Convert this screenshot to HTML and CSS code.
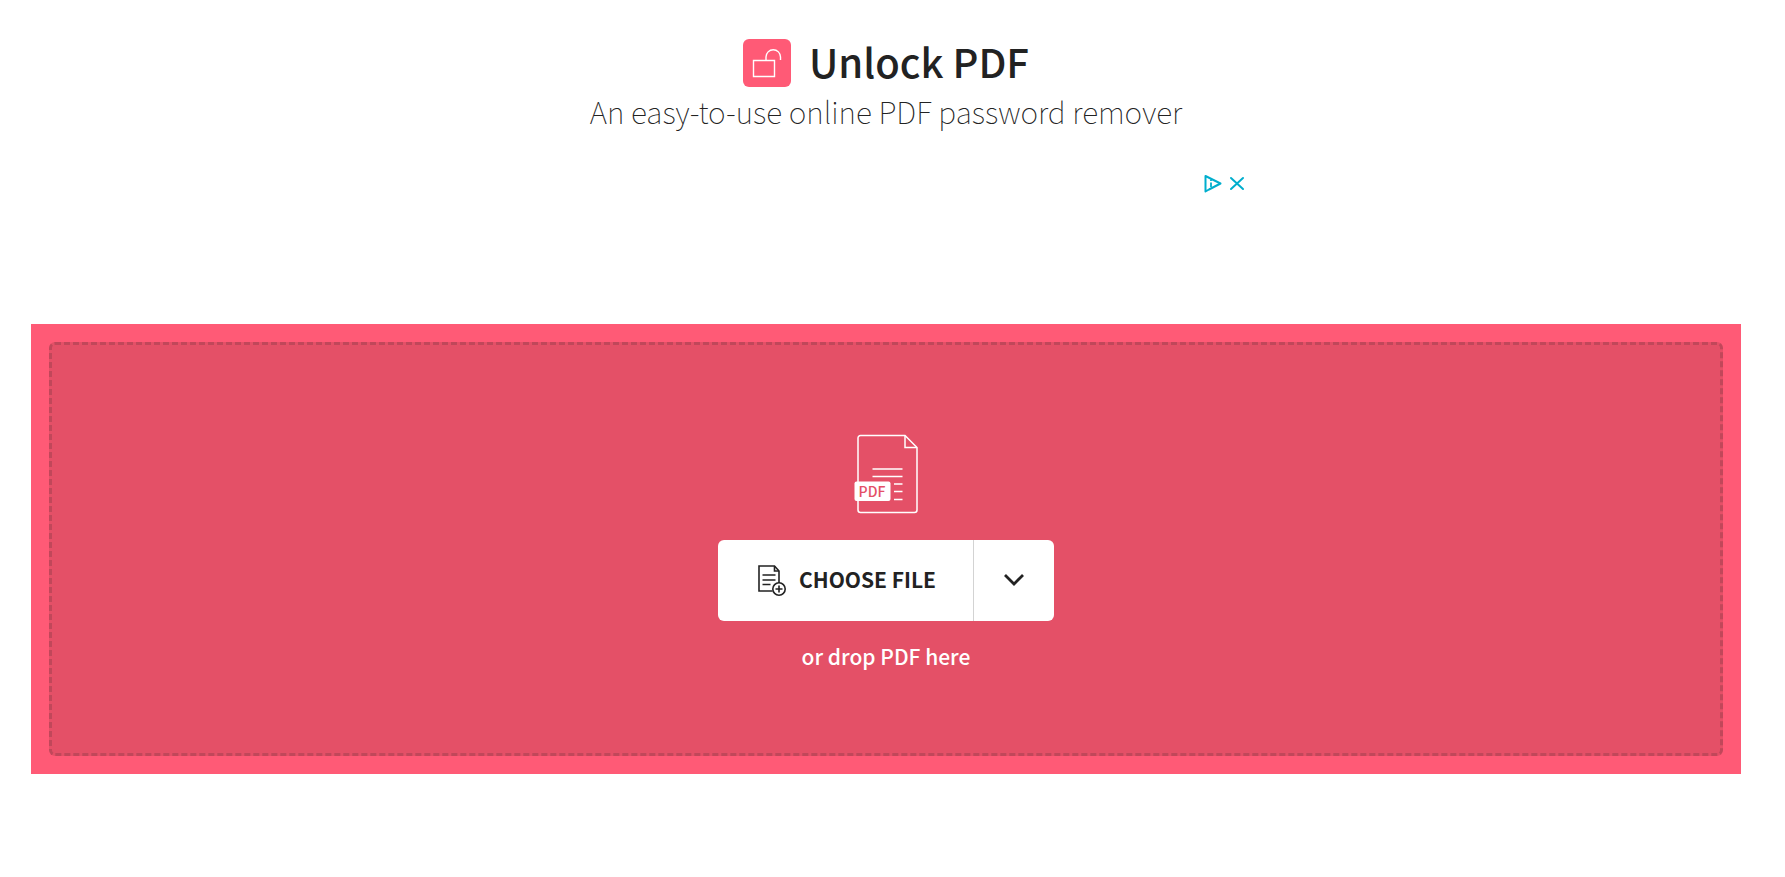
FILE: index.html
```html
<!DOCTYPE html>
<html lang="en">
<head>
    <meta charset="UTF-8">
    <title>Unlock PDF</title>
    <link rel="stylesheet" href="styles.css">
</head>

<body>
<div class="page">
    <header class="header">
        <div class="title">
            <span class="title-icon">
                <svg width="48" height="48" viewBox="0 0 48 48" fill="none" stroke="#fff" stroke-width="1.4">
                    <path d="M10.500 21.500h21v16h-21z"/>
                    <path d="M23 21.500v-3.500a7 7 0 0 1 14.500 0v3"/>
                </svg>
            </span>
            <h1>Unlock PDF</h1>
        </div>
        <h2 class="subtitle">An easy-to-use online PDF password remover</h2>
    </header>

    <div class="ad">
        <a href="#" aria-label="Ad choices">
            <svg width="20" height="20" viewBox="0 0 20 20" fill="none" stroke="#00aecd" stroke-width="2" stroke-linejoin="round">
                <path d="M2.500 3L17.500 10.500L6 16.500L2.500 18.500z"/>
                <path d="M8 9.500v4.500M8 6.500v1.500" stroke-width="1.800"/>
            </svg>
        </a>
        <button type="button" aria-label="Close ad">
            <svg width="16" height="20" viewBox="0 0 16 20" fill="none" stroke="#00aecd" stroke-width="2" stroke-linecap="round">
                <path d="M2 5l12 11M14 5L2 16"/>
            </svg>
        </button>
    </div>

    <main class="panel">
        <div class="drop">
            <svg class="pdf" width="64" height="80" viewBox="0 0 64 80" fill="none" stroke="#fff" stroke-width="1.5">
                <path d="M51 1.500H6.500a2.500 2.500 0 0 0-2.500 2.500v72a2.500 2.500 0 0 0 2.500 2.500h54a2.500 2.500 0 0 0 2.500-2.500V13.500z"/>
                <path d="M51 1.500v12h12"/>
                <path d="M18.500 35h30M18.500 42.500h30M40 50h8.500M40 57.500h8.500M40 65.500h8.500"/>
                <rect x="0.500" y="47.500" width="36" height="19.500" rx="2" fill="#fff" stroke="none"/>
                <text x="18" y="62.500" text-anchor="middle" fill="#e45067" stroke="none">PDF</text>
            </svg>
            <div class="choose">
                <button type="button" class="choose-file">
                    <svg width="30" height="34" viewBox="0 0 30 34" fill="none" stroke="#222" stroke-width="1.6">
                        <path d="M22 19V7L17.500 2H2v25h13.500"/>
                        <path d="M17.500 2v5H22"/>
                        <path d="M5.500 11h13M5.500 16h13M5.500 20.500h8"/>
                        <circle cx="22" cy="25" r="6.200"/>
                        <path d="M22 21.500v7M18.500 25h7"/>
                    </svg>
                    <span>CHOOSE FILE</span>
                </button>
                <button type="button" class="choose-more" aria-label="More sources">
                    <svg width="22" height="16" viewBox="0 0 22 16" fill="none" stroke="#222" stroke-width="2.800">
                        <path d="M2 2l9 9l9-9"/>
                    </svg>
                </button>
            </div>
            <p class="hint">or drop PDF here</p>
        </div>
    </main>
</div>
</body>
</html>
```
FILE: styles.css
```css
*{
    box-sizing: border-box;
    padding: 0;
    margin: 0;
}
body{
    background-color: #fff;
    color: #222;
    font-family: "Noto Sans CJK SC", "Noto Sans", sans-serif;
}
button{
    border: 0;
    background: none;
    color: inherit;
    font-family: inherit;
    cursor: pointer;
}
svg{
    display: block;
}
.page{
    padding: 39px 44px 40px 31px;
}
.header{
    text-align: center;
}
.title{
    display: flex;
    justify-content: center;
    gap: 18px;
    height: 48px;
}
.title-icon{
    height: 48px;
    border-radius: 6px;
    background-color: #ff5a76;
}
.title h1{
    font-size: 40px;
    font-weight: 500;
    line-height: 44px;
}
.subtitle{
    margin-top: 4px;
    font-size: 30px;
    font-weight: 100;
    line-height: 40px;
}
.ad{
    display: flex;
    justify-content: flex-end;
    align-items: flex-start;
    gap: 6px;
    width: 100%;
    max-width: 728px;
    height: 151px;
    margin: 42px auto 0;
    padding-right: 5px;
}
.panel{
    padding: 18px;
    background-color: #ff5a76;
}
.drop{
    display: flex;
    flex-direction: column;
    align-items: center;
    min-height: 414px;
    padding: 89px 20px 20px;
    border: 3px dashed rgba(34, 34, 34, .18);
    border-radius: 6px;
    background-color: #e45067;
}
.pdf text{
    font-size: 14px;
    font-weight: 500;
}
.choose{
    display: flex;
    height: 81px;
    margin-top: 26px;
    border-radius: 6px;
    background-color: #fff;
}
.choose-file{
    display: flex;
    align-items: center;
    gap: 12px;
    padding: 0 37px 0 39px;
    font-size: 21px;
    font-weight: 700;
}
.choose-file span{
    padding-bottom: 4px;
}
.choose-more{
    display: flex;
    align-items: center;
    justify-content: center;
    width: 81px;
    border-left: 1px solid #d3d3d3;
}
.hint{
    margin-top: 19px;
    color: #fff;
    font-size: 21px;
    font-weight: 500;
    line-height: 32px;
}
```
